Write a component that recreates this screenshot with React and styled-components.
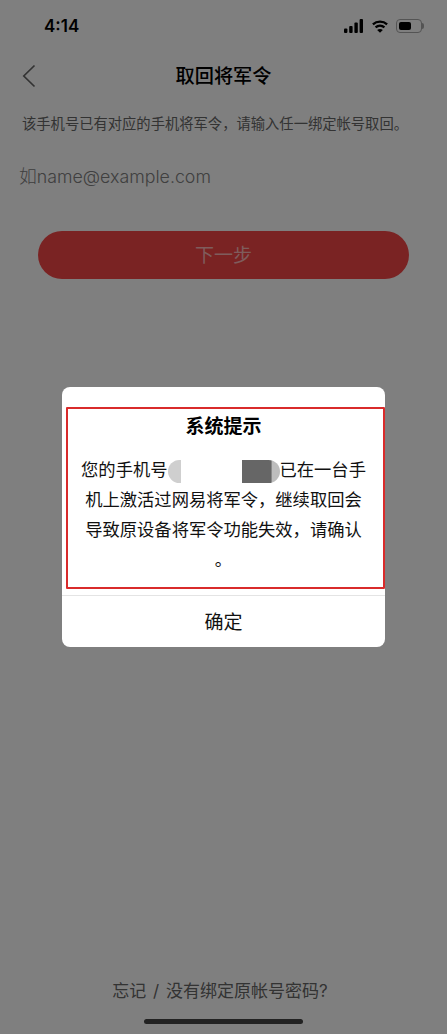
import React from 'react'
import styled, { createGlobalStyle } from 'styled-components'

const GlobalStyle = createGlobalStyle`
    html, body {
        margin: 0;
        padding: 0;
        background: #ffffff;
    }
    * {
        box-sizing: border-box;
    }
`

const CJK = `Inter, "Noto Sans CJK SC", sans-serif`

const App = () => {
    return (
        <StyledPage>
            <GlobalStyle />
            <StyledStatusBar>
                <StyledTime>4:14</StyledTime>
                <StyledStatusIcons>
                    <svg width="20" height="14" viewBox="0 0 20 14" fill="#000">
                        <rect x="0" y="9.5" width="3.4" height="4.5" rx="1" />
                        <rect x="5.2" y="7" width="3.4" height="7" rx="1" />
                        <rect x="10.4" y="3.5" width="3.4" height="10.5" rx="1" />
                        <rect x="15.6" y="0" width="3.4" height="14" rx="1" />
                    </svg>
                    <svg width="16" height="13" viewBox="0 0 18 14" fill="none" stroke="#000" strokeWidth="2.6">
                        <path d="M1 4.6C5.5 .6 12.5 .6 17 4.6" />
                        <path d="M4 8C6.9 5.5 11.1 5.5 14 8" />
                        <path d="M9 14 5.8 10.8C7.6 9.5 10.4 9.5 12.2 10.8Z" fill="#000" stroke="none" />
                    </svg>
                    <StyledBattery>
                        <StyledBatteryLevel />
                    </StyledBattery>
                </StyledStatusIcons>
            </StyledStatusBar>

            <StyledNav>
                <StyledBack>
                    <svg width="14" height="24" viewBox="0 0 14 24" fill="none" stroke="#666666" strokeWidth="1.7">
                        <path d="M12.5 1.5 1.8 12l10.7 10.5" />
                    </svg>
                </StyledBack>
                <StyledNavTitle>取回将军令</StyledNavTitle>
            </StyledNav>

            <StyledHint>该手机号已有对应的手机将军令，请输入任一绑定帐号取回。</StyledHint>
            <StyledInput>如name@example.com</StyledInput>
            <StyledNextButton>下一步</StyledNextButton>

            <StyledSpacer />

            <StyledFooterLink>忘记 / 没有绑定原帐号密码?</StyledFooterLink>
            <StyledHomeBar />

            <StyledOverlay>
                <StyledDialog>
                    <StyledDialogTitle>系统提示</StyledDialogTitle>
                    <StyledDialogText>
                        <StyledLine>
                            您的手机号
                            <StyledMask>
                                <StyledMaskLeft />
                                <StyledMaskRight />
                            </StyledMask>
                            已在一台手
                        </StyledLine>
                        <StyledLine>机上激活过网易将军令，继续取回会</StyledLine>
                        <StyledLine>导致原设备将军令功能失效，请确认</StyledLine>
                        <StyledLine>。</StyledLine>
                    </StyledDialogText>
                    <StyledDialogAction>确定</StyledDialogAction>
                    <StyledAnnotation />
                </StyledDialog>
            </StyledOverlay>
        </StyledPage>
    )
}

export default App

const StyledPage = styled.div`
    position: relative;
    width: 447px;
    height: 1034px;
    overflow: hidden;
    display: flex;
    flex-direction: column;
    background: #ffffff;
    font-family: ${CJK};
`
const StyledStatusBar = styled.div`
    height: 52px;
    padding: 0 25px 0 44px;
    display: flex;
    align-items: center;
    justify-content: space-between;
`
const StyledTime = styled.div`
    font-size: 17px;
    font-weight: 600;
    color: #000000;
`
const StyledStatusIcons = styled.div`
    display: flex;
    align-items: center;
    gap: 8px;
`
const StyledBattery = styled.div`
    position: relative;
    width: 26px;
    height: 14px;
    padding: 2px;
    border: 1px solid #a8a8a8;
    border-radius: 4px;
    &::after {
        content: '';
        position: absolute;
        right: -3px;
        top: 3px;
        width: 2px;
        height: 6px;
        border-radius: 0 2px 2px 0;
        background: #a8a8a8;
    }
`
const StyledBatteryLevel = styled.div`
    width: 12px;
    height: 100%;
    border-radius: 2px;
    background: #000000;
`
const StyledNav = styled.div`
    position: relative;
    height: 48px;
    padding-bottom: 2px;
    display: flex;
    align-items: center;
    justify-content: center;
`
const StyledBack = styled.div`
    position: absolute;
    left: 22px;
    top: 12px;
    line-height: 0;
`
const StyledNavTitle = styled.div`
    font-size: 19.2px;
    font-weight: 500;
    color: #000000;
`
const StyledHint = styled.div`
    margin-top: 14px;
    padding-left: 22px;
    font-size: 14.3px;
    line-height: 20px;
    white-space: nowrap;
    color: #666666;
`
const StyledInput = styled.div`
    margin-top: 30px;
    padding-left: 19px;
    font-size: 17.8px;
    line-height: 26px;
    color: #808080;
    font-weight: 300;
`
const StyledNextButton = styled.div`
    margin: 41px 38px 0;
    height: 48px;
    padding-bottom: 3px;
    border-radius: 24px;
    display: flex;
    align-items: center;
    justify-content: center;
    background: #f44646;
    color: #ffb8b8;
    font-size: 19px;
`
const StyledSpacer = styled.div`
    flex: 1;
`
const StyledFooterLink = styled.div`
    padding-right: 7px;
    text-align: center;
    font-size: 17px;
    line-height: 24px;
    word-spacing: 2px;
    color: #666666;
`
const StyledHomeBar = styled.div`
    align-self: center;
    margin: 16px 0 10px;
    width: 159px;
    height: 5px;
    border-radius: 3px;
    background: #444444;
`
const StyledOverlay = styled.div`
    position: absolute;
    inset: 0;
    padding: 387px 62px 0;
    background: rgba(0, 0, 0, 0.5);
`
const StyledDialog = styled.div`
    position: relative;
    width: 323px;
    height: 260px;
    border-radius: 8px;
    overflow: hidden;
    display: flex;
    flex-direction: column;
    background: #ffffff;
`
const StyledDialogTitle = styled.div`
    margin-top: 27px;
    text-align: center;
    font-size: 19px;
    font-weight: 700;
    line-height: 26px;
    color: #000000;
`
const StyledDialogText = styled.div`
    margin-top: 15px;
    height: 140px;
    text-align: center;
    font-size: 17.3px;
    line-height: 30px;
    color: #111111;
`
const StyledLine = styled.div`
    white-space: nowrap;
`
const StyledMask = styled.span`
    display: inline-flex;
    justify-content: space-between;
    vertical-align: middle;
    width: 112px;
    height: 23px;
`
const StyledMaskLeft = styled.span`
    width: 13px;
    height: 100%;
    border-radius: 12px 0 0 12px;
    background: #cfcfcf;
    filter: blur(0.5px);
`
const StyledMaskRight = styled.span`
    width: 38px;
    height: 100%;
    border-radius: 0 12px 12px 0;
    background: linear-gradient(90deg, #666666 76%, #bdbdbd 80%);
    filter: blur(0.5px);
`
const StyledDialogAction = styled.div`
    flex: 1;
    padding-bottom: 2px;
    display: flex;
    align-items: center;
    justify-content: center;
    border-top: 1px solid #e4e4e4;
    font-size: 19px;
    color: #111111;
`
const StyledAnnotation = styled.div`
    position: absolute;
    left: 4px;
    top: 20px;
    width: 319px;
    height: 182px;
    border: 2px solid #d92b2b;
    border-radius: 1px;
`
